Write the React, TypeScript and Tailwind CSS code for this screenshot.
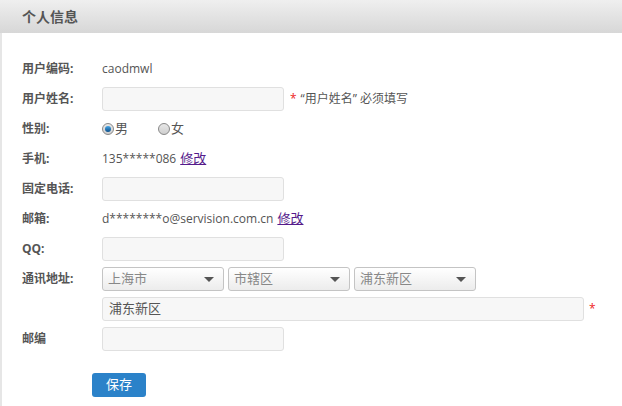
import React from "react";

const font = { fontFamily: '"Open Sans", "Noto Sans CJK SC", sans-serif' };

function Label({ children }: { children: React.ReactNode }) {
  return <div className="w-[80px] shrink-0 text-[12px] font-bold text-[#555]">{children}</div>;
}

function Input({ w = "w-[182px]" }: { w?: string }) {
  return <div className={`${w} h-[24px] rounded-[3px] border border-[#e0e0e0] bg-[#f7f7f7]`} />;
}

function Select({ text }: { text: string }) {
  return (
    <div className="flex h-[24px] w-[122px] items-center justify-between rounded-[3px] border border-[#c4c4c4] bg-gradient-to-b from-[#ffffff] to-[#ececec] pl-[5px] pr-[9px] text-[13px] text-[#888]">
      <span>{text}</span>
      <span className="h-0 w-0 border-x-[5px] border-t-[5px] border-x-transparent border-t-[#555]" />
    </div>
  );
}

function Radio({ checked }: { checked: boolean }) {
  return (
    <span className="flex h-[12px] w-[12px] items-center justify-center rounded-full border border-[#888] bg-gradient-to-b from-[#e8e8e8] to-[#cfcfcf]">
      {checked && <span className="h-[6px] w-[6px] rounded-full bg-gradient-to-b from-[#47a6e6] to-[#0a4f8a]" />}
    </span>
  );
}

function Row({ label, children }: { label: React.ReactNode; children: React.ReactNode }) {
  return (
    <div className="flex h-[30px] items-center">
      <Label>{label}</Label>
      <div className="flex items-center">{children}</div>
    </div>
  );
}

export default function App() {
  return (
    <div style={font} className="h-[406px] w-[622px] bg-white text-[#555]">
      <div className="flex h-[33px] items-center bg-gradient-to-b from-[#efefef] to-[#d7d7d7] pl-[22px] text-[14px] font-bold text-[#555]">
        个人信息
      </div>
      <div className="h-[373px] border-l-2 border-[#e6e6e6] pl-[20px] pt-[21px]">
        <Row label="用户编码:">
          <span className="text-[12px]">caodmwl</span>
        </Row>
        <Row label="用户姓名:">
          <Input />
          <span className="ml-[6px] text-[12px] text-[#e22]">*</span>
          <span className="ml-[4px] whitespace-pre text-[12px] text-[#555]">“用户姓名” 必须填写</span>
        </Row>
        <Row label="性别:">
          <Radio checked />
          <span className="ml-[1px] text-[13px]">男</span>
          <span className="ml-[30px]" />
          <Radio checked={false} />
          <span className="ml-[1px] text-[13px]">女</span>
        </Row>
        <Row label="手机:">
          <span className="text-[12px]">135*****086</span>
          <a className="ml-[4px] text-[13px] text-[#551a8b] underline">修改</a>
        </Row>
        <Row label="固定电话:">
          <Input />
        </Row>
        <Row label="邮箱:">
          <span className="text-[12px]">d********o@servision.com.cn</span>
          <a className="ml-[4px] text-[13px] text-[#551a8b] underline">修改</a>
        </Row>
        <Row label="QQ:">
          <Input />
        </Row>
        <Row label="通讯地址:">
          <div className="flex gap-[4px]">
            <Select text="上海市" />
            <Select text="市辖区" />
            <Select text="浦东新区" />
          </div>
        </Row>
        <Row label="">
          <div className="flex h-[24px] w-[482px] items-center rounded-[3px] border border-[#e0e0e0] bg-[#f7f7f7] pl-[6px] text-[13px] text-[#555]">
            浦东新区
          </div>
          <span className="ml-[5px] text-[12px] text-[#e22]">*</span>
        </Row>
        <Row label="邮编">
          <Input />
        </Row>
        <div className="ml-[70px] mt-[19px]">
          <button className="flex h-[24px] w-[54px] items-center justify-center rounded-[3px] bg-[#2b82c9] text-[13px] text-white">
            保存
          </button>
        </div>
      </div>
    </div>
  );
}
